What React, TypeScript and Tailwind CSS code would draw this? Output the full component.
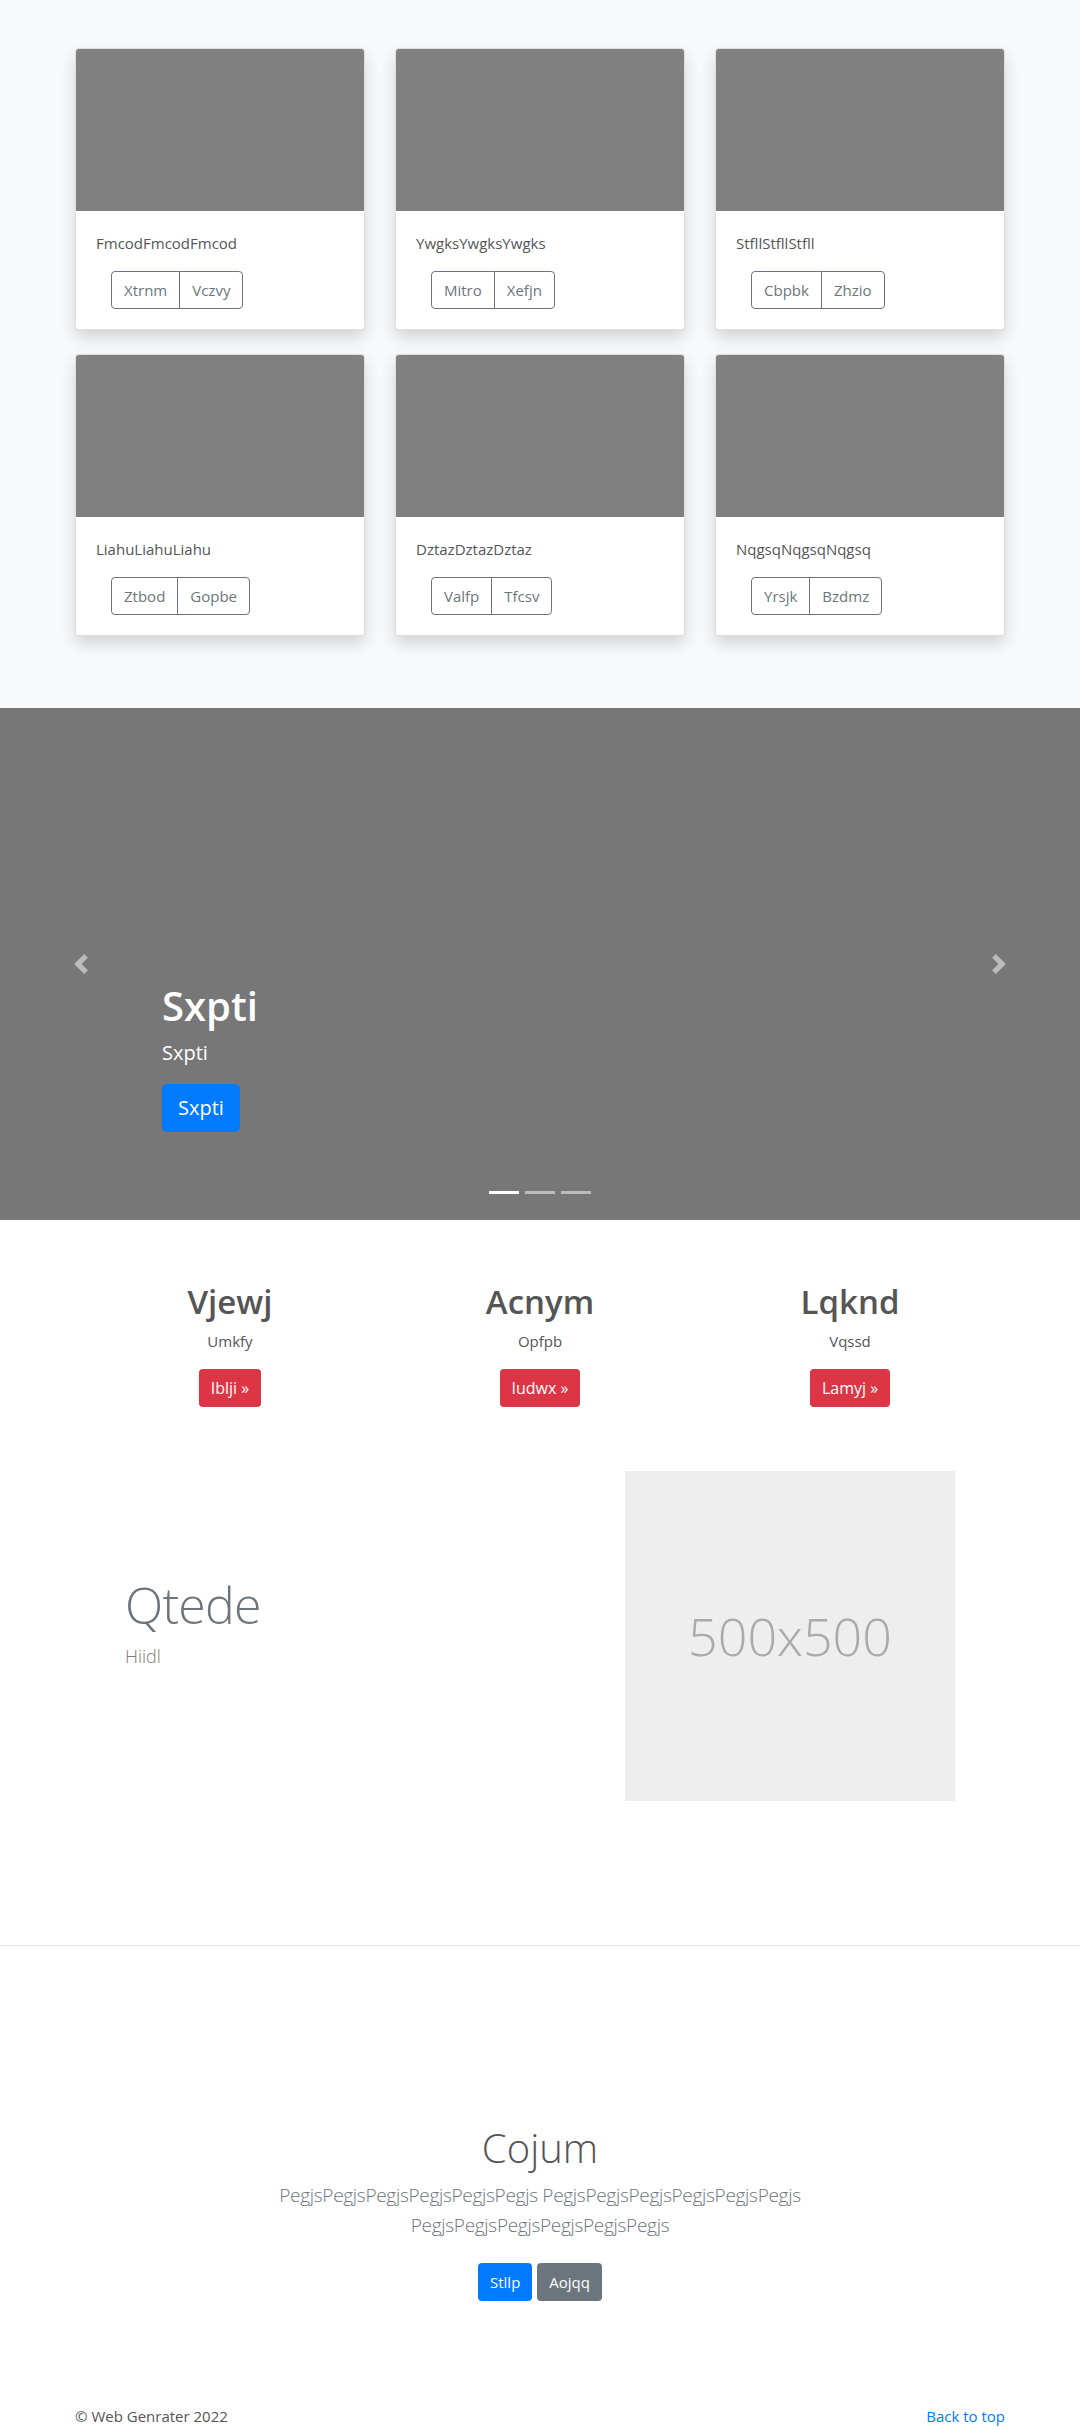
import React from "react";

const cards = [
  { title: "FmcodFmcodFmcod", a: "Xtrnm", b: "Vczvy" },
  { title: "YwgksYwgksYwgks", a: "Mitro", b: "Xefjn" },
  { title: "StfllStfllStfll", a: "Cbpbk", b: "Zhzio" },
  { title: "LiahuLiahuLiahu", a: "Ztbod", b: "Gopbe" },
  { title: "DztazDztazDztaz", a: "Valfp", b: "Tfcsv" },
  { title: "NqgsqNqgsqNqgsq", a: "Yrsjk", b: "Bzdmz" },
];

const marketing = [
  { title: "Vjewj", text: "Umkfy", btn: "Iblji" },
  { title: "Acnym", text: "Opfpb", btn: "Iudwx" },
  { title: "Lqknd", text: "Vqssd", btn: "Lamyj" },
];

function Chevron({ dir }: { dir: "left" | "right" }) {
  return (
    <svg width="20" height="20" viewBox="0 0 8 8" fill="#fff" className="opacity-50">
      {dir === "left" ? (
        <path d="M5.25 0l-4 4 4 4 1.5-1.5L4.25 4l2.5-2.5L5.25 0z" />
      ) : (
        <path d="M2.75 0l-1.5 1.5L3.75 4l-2.5 2.5L2.75 8l4-4-4-4z" />
      )}
    </svg>
  );
}

export default function App() {
  return (
    <div
      className="h-[2429px] overflow-hidden bg-white text-[#212529]"
      style={{ fontFamily: '"Open Sans", "Noto Sans", Arial, sans-serif' }}
    >
      {/* ALBUM */}
      <section className="bg-[#f8f9fa] pt-12 pb-[72px]">
        <div className="w-[930px] mx-auto grid grid-cols-3 gap-x-[30px] gap-y-[24px]">
          {cards.map((c) => (
            <div
              key={c.title}
              className="bg-white border border-black/[0.125] rounded-[4px] overflow-hidden shadow-[0_0.5rem_1rem_rgba(0,0,0,0.15)]"
            >
              <div className="h-[162px] bg-[#808080]" />
              <div className="p-5">
                <p className="text-[15px] leading-6 text-[#555]">{c.title}</p>
                <div className="mt-4 ml-[15px] flex">
                  <button className="h-[38px] px-3 text-[15px] text-[#6c757d] border border-[#6c757d] rounded-l-[4px]">
                    {c.a}
                  </button>
                  <button className="h-[38px] px-3 -ml-px text-[15px] text-[#6c757d] border border-[#6c757d] rounded-r-[4px]">
                    {c.b}
                  </button>
                </div>
              </div>
            </div>
          ))}
        </div>
      </section>

      {/* CAROUSEL */}
      <section className="relative h-[512px] bg-[#777] flex flex-col justify-end pl-[162px] pb-[88px]">
        <div className="absolute left-0 top-0 bottom-0 w-[15%] flex items-center justify-center">
          <Chevron dir="left" />
        </div>
        <div className="absolute right-0 top-0 bottom-0 w-[15%] flex items-center justify-center">
          <Chevron dir="right" />
        </div>

        <h1 className="text-[40px] leading-[48px] font-semibold text-white">Sxpti</h1>
        <p className="mt-2 text-[20px] leading-[30px] text-white">Sxpti</p>
        <div className="mt-4">
          <button className="h-12 px-4 rounded-[5px] bg-[#007bff] text-white text-[20px]">
            Sxpti
          </button>
        </div>

        <div className="absolute left-0 right-0 bottom-[26px] flex justify-center gap-[6px]">
          <span className="w-[30px] h-[3px] bg-white" />
          <span className="w-[30px] h-[3px] bg-white/50" />
          <span className="w-[30px] h-[3px] bg-white/50" />
        </div>
      </section>

      {/* MARKETING */}
      <section className="pt-[63px] w-[930px] mx-auto">
        <div className="grid grid-cols-3 text-center">
          {marketing.map((m) => (
            <div key={m.title} className="flex flex-col items-center">
              <h2 className="text-[33px] leading-[38px] font-semibold text-[#555]">{m.title}</h2>
              <p className="mt-2 text-[15px] leading-6 text-[#555]">{m.text}</p>
              <button className="mt-4 h-[38px] px-3 rounded-[4px] bg-[#dc3545] text-white text-[16px]">
                {m.btn} »
              </button>
            </div>
          ))}
        </div>

        {/* FEATURETTE */}
        <div className="mt-[64px] h-[330px] flex items-center justify-between px-[50px]">
          <div className="pb-[22px]">
            <h2 className="text-[50px] leading-[50px] font-light tracking-[-0.8px] text-[#6c757d]">
              Qtede
            </h2>
            <p className="mt-[13px] text-[18px] leading-[27px] font-light text-[#857a72]">Hiidl</p>
          </div>
          <div className="w-[330px] h-[330px] bg-[#eee] flex items-center justify-center">
            <span className="text-[52px] font-light text-[#aaa]">500x500</span>
          </div>
        </div>
      </section>

      <hr className="mt-[144px] border-0 border-t border-[#e5e5e5]" />

      {/* JUMBOTRON */}
      <section className="pt-[178px] text-center">
        <h1 className="text-[40px] leading-[48px] font-light text-[#555]">Cojum</h1>
        <p className="mt-2 mx-auto max-w-[610px] text-[19px] leading-[30px] font-light tracking-[-0.3px] text-[#6c757d]">
          PegjsPegjsPegjsPegjsPegjsPegjs PegjsPegjsPegjsPegjsPegjsPegjs PegjsPegjsPegjsPegjsPegjsPegjs
        </p>
        <div className="mt-[23px] flex justify-center gap-[5px]">
          <button className="h-[38px] px-3 rounded-[4px] bg-[#007bff] text-white text-[15px]">Stllp</button>
          <button className="h-[38px] px-3 rounded-[4px] bg-[#6c757d] text-white text-[15px]">Aojqq</button>
        </div>
      </section>

      {/* FOOTER */}
      <footer className="mt-[103px] w-[930px] mx-auto flex justify-between text-[15px] leading-6">
        <p className="text-[#555]">© Web Genrater 2022</p>
        <a href="#" className="text-[#007bff]">
          Back to top
        </a>
      </footer>
    </div>
  );
}
